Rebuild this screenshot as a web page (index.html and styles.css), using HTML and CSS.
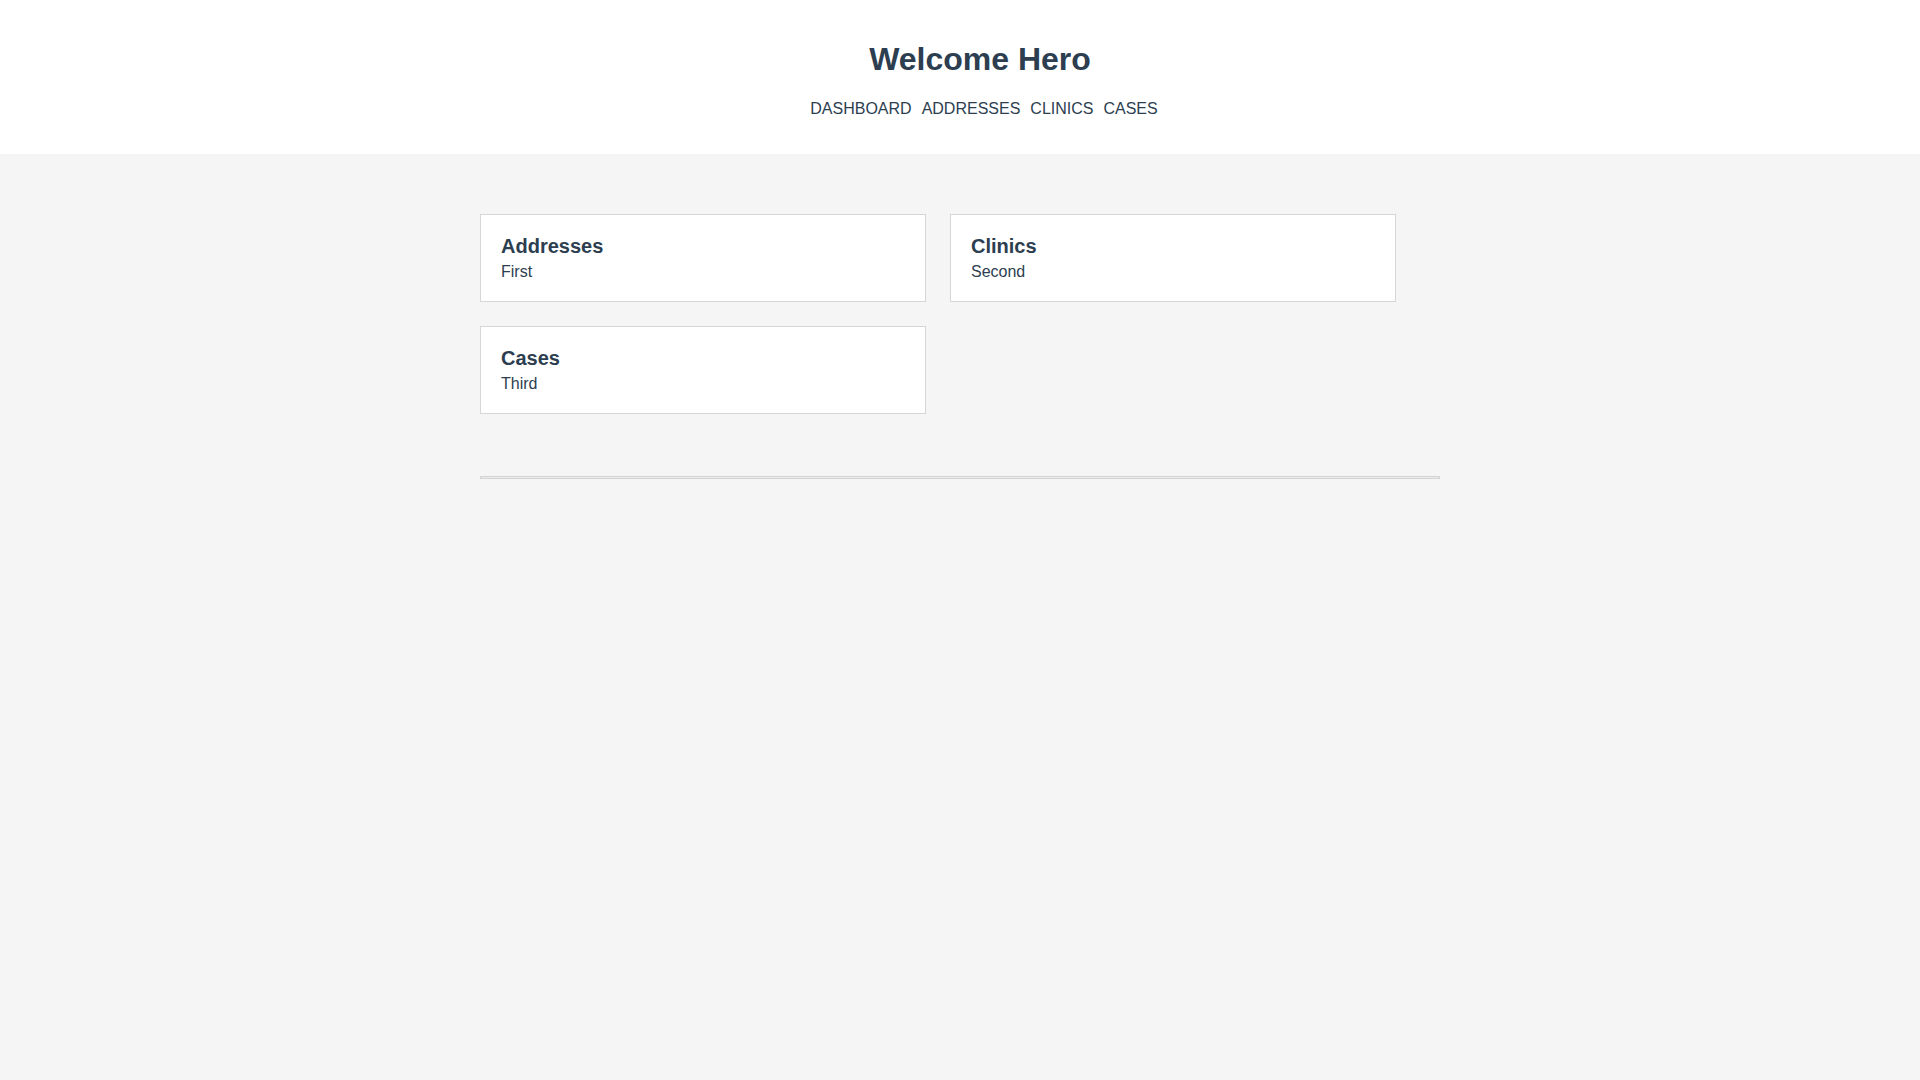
FILE: index.html
```html
<!DOCTYPE html>
<html lang="en">
<head>
  <meta charset="UTF-8">
  <meta name="viewport" content="width=device-width, initial-scale=1.0">
  <title>Welcome Hero</title>
  <link rel="stylesheet" href="styles.css">
</head>
<body>
  <!-- Cabecera -->
  <header class="site-header">
    <h1>Welcome Hero</h1>
    <nav class="main-nav">
      <a href="#">DASHBOARD</a>
      <a href="#">ADDRESSES</a>
      <a href="#">CLINICS</a>
      <a href="#">CASES</a>
    </nav>
  </header>

  <!-- Contenido -->
  <main class="content">
    <div class="cards">
      <div class="card">
        <h2>Addresses</h2>
        <p>First</p>
      </div>
      <div class="card">
        <h2>Clinics</h2>
        <p>Second</p>
      </div>
      <div class="card">
        <h2>Cases</h2>
        <p>Third</p>
      </div>
    </div>
    <hr class="divider">
  </main>
</body>
</html>
```

FILE: styles.css
```css
/* RESET */
* {
  box-sizing: border-box;
}

body {
  margin: 0;
  font-family: "Liberation Sans", Arial, sans-serif;
  background-color: #f5f5f5;
  color: #2c3e50;
  min-height: 100vh;
}

/* CABECERA */
.site-header {
  background-color: #fff;
  text-align: center;
  padding: 41px 0 36px 40px;
}

.site-header h1 {
  font-size: 32px;
  font-weight: bold;
  margin: 0 0 22px;
}

.main-nav {
  display: flex;
  justify-content: center;
  gap: 10px;
  padding-left: 8px;
}

.main-nav a {
  color: #2c3e50;
  text-decoration: none;
  font-size: 16px;
}

/* CONTENIDO */
.content {
  width: 960px;
  margin: 60px auto 0;
}

.cards {
  display: grid;
  grid-template-columns: 446px 446px;
  column-gap: 24px;
  row-gap: 24px;
}

.card {
  background-color: #fff;
  border: 1px solid #d6d6d6;
  padding: 20px 20px 20px;
}

.card h2 {
  font-size: 20px;
  margin: 0 0 5px;
}

.card p {
  font-size: 16px;
  margin: 0;
}

.divider {
  margin: 62px 0 0;
  height: 3px;
  border: 1px solid #d3d3d3;
  background-color: #ececec;
}
```
